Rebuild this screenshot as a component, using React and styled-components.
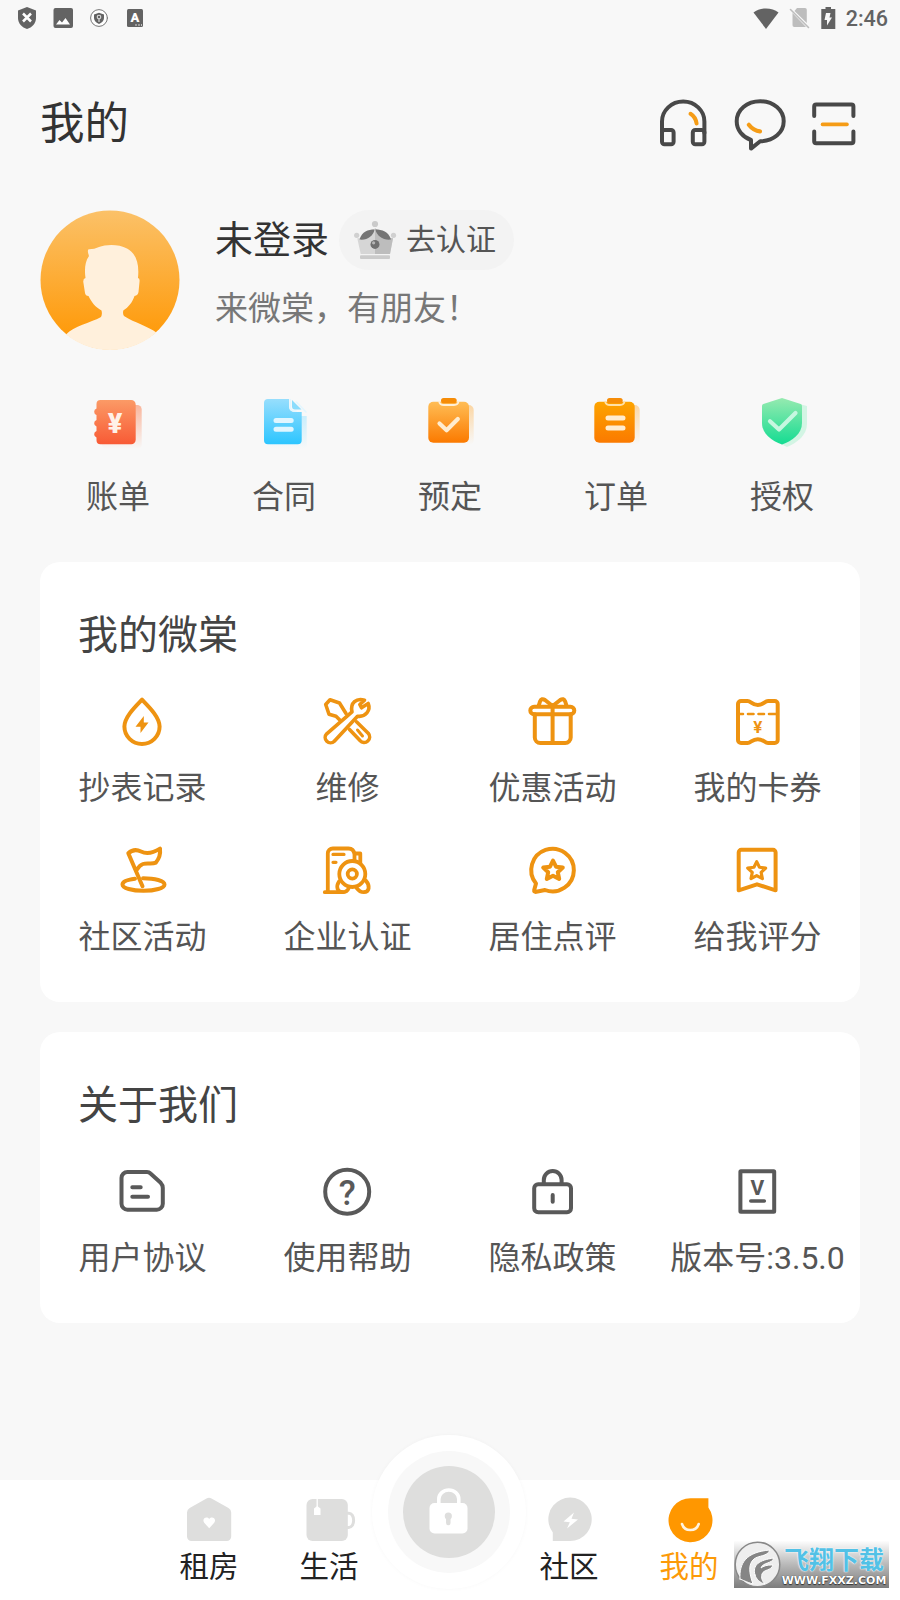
import React from 'react'
import styled, { createGlobalStyle } from 'styled-components'

const GlobalStyle = createGlobalStyle`
  * { box-sizing: border-box; }
  body {
    margin: 0;
    background: #f8f8f8;
    font-family: Roboto, "Noto Sans CJK SC", sans-serif;
  }
`
const Page = styled.div`
  position: relative;
  width: 900px;
  height: 1600px;
  display: flex;
  flex-direction: column;
  overflow: hidden;
  background: #f8f8f8;
`
const Icon = styled.svg`
  display: block;
  flex: none;
  width: ${props => props.$w || 56}px;
  height: ${props => props.$h || props.$w || 56}px;
  overflow: visible;
  fill: none;
  stroke-linecap: round;
  stroke-linejoin: round;
`
const LineIcon = styled(Icon)`
  stroke: ${props => props.$color || '#ee9311'};
  stroke-width: ${props => props.$stroke || 4};
`
const Glyph = styled.text`
  font-family: Roboto, sans-serif;
  font-size: ${props => props.$size}px;
  font-weight: ${props => props.$weight || 500};
  text-anchor: middle;
  stroke: none;
`

/* status bar */
const StatusBar = styled.div`
  display: flex;
  align-items: center;
  height: 36px;
  padding: 0 12px 0 17px;
`
const StatusGroup = styled.div`
  display: flex;
  align-items: center;
  gap: ${props => props.$gap}px;
  margin-left: ${props => (props.$right ? 'auto' : 0)};
`
const Clock = styled.span`
  margin-left: -1px;
  padding-top: 2px;
  font-size: 21.5px;
  line-height: 34px;
  font-weight: 500;
  color: #636363;
`

/* header */
const Header = styled.header`
  display: flex;
  align-items: center;
  justify-content: space-between;
  height: 84px;
  margin-top: 44px;
  padding: 0 36px 0 40px;
`
const Title = styled.h1`
  margin: 0;
  padding-top: 4px;
  font-size: 44.5px;
  line-height: 60px;
  font-weight: 400;
  color: #333;
`
const Actions = styled.div`
  display: flex;
  gap: 20px;
`

/* profile */
const Profile = styled.section`
  display: flex;
  gap: 35px;
  margin-top: 46px;
  padding-left: 40px;
`
const NameRow = styled.div`
  display: flex;
  align-items: center;
  gap: 10px;
  height: 60px;
`
const Name = styled.span`
  font-size: 38px;
  line-height: 60px;
  color: #333;
`
const Badge = styled.span`
  display: flex;
  align-items: center;
  gap: 9px;
  height: 60px;
  padding: 0 18px 0 14px;
  border-radius: 30px;
  background: #f3f3f3;
  font-size: 30px;
  line-height: 60px;
  color: #555;
`
const Slogan = styled.p`
  margin: 19px 0 0;
  font-size: 33px;
  line-height: 40px;
  color: #777;
`

/* grids */
const Shortcuts = styled.section`
  display: grid;
  grid-template-columns: repeat(5, 166px);
  height: 168px;
  padding: 44px 35px 0;
`
const Cell = styled.div`
  display: flex;
  flex-direction: column;
  align-items: center;
  gap: ${props => props.$gap || 17}px;
`
const Label = styled.span`
  font-size: 32px;
  line-height: 44px;
  white-space: nowrap;
  color: #555;
`
const Card = styled.section`
  height: ${props => props.$height}px;
  margin: ${props => props.$top}px 40px 0;
  padding-top: 44px;
  border-radius: 20px;
  background: #fff;
`
const CardTitle = styled.h2`
  margin: 0 0 27px 38px;
  font-size: 40px;
  line-height: 60px;
  font-weight: 400;
  color: #444;
`
const CardGrid = styled.div`
  display: grid;
  grid-template-columns: repeat(4, 205px);
  row-gap: 32px;

  svg {
    margin-left: -1px;
  }
`

/* bottom nav */
const Nav = styled.nav`
  display: flex;
  align-items: flex-start;
  height: 120px;
  margin-top: auto;
  padding-left: 149px;
  background: #fff;
`
const NavItem = styled.div`
  display: flex;
  flex-direction: column;
  align-items: center;
  gap: 3px;
  width: 120px;
  padding-top: 16px;
  font-size: 29.5px;
  line-height: 40px;
  color: ${props => (props.$active ? '#fc9a08' : '#222')};
`
const Unlock = styled.div`
  display: flex;
  align-items: center;
  justify-content: center;
  flex: none;
  width: 154px;
  height: 154px;
  margin: -45px -17px 0;
  border-radius: 50%;
  background: #fff;
  box-shadow: 0 0 4px rgba(0, 0, 0, 0.03);
`
const UnlockRing = styled.div`
  padding: 15px;
  border-radius: 50%;
  background: #f8f8f8;
`
const UnlockCore = styled.div`
  width: 92px;
  height: 92px;
  border-radius: 50%;
  background: #dededd;
`

/* site stamp lying over the corner of the nav */
const Stamp = styled.div`
  position: absolute;
  right: 11px;
  bottom: 12px;
  display: flex;
  align-items: center;
  width: 155px;
  height: 47px;
  background: linear-gradient(#fdfdfd, #b9b9b9 50%, #7d7d7d);
`
const StampText = styled.div`
  display: flex;
  flex-direction: column;
  align-items: center;
  width: 106px;
  padding-top: 4px;
`
const StampName = styled.span`
  font-size: 25px;
  line-height: 27px;
  font-weight: 700;
  color: #52c1e6;
  white-space: nowrap;
  text-shadow: 0 0 2px #fff, 0 0 1px #fff;
`
const StampUrl = styled.span`
  font-family: "DejaVu Sans", sans-serif;
  font-size: 11px;
  line-height: 13px;
  font-weight: 700;
  color: #fff;
  white-space: nowrap;
  text-shadow: 0 0 1px #333, 0 1px 1px #333;
`

const Gradient = ({ id, from, to }) => (
  <linearGradient id={id} x1="0" y1="0" x2="0" y2="1">
    <stop offset="0" stopColor={from} />
    <stop offset="1" stopColor={to} />
  </linearGradient>
)

const STAR = 'M0 -10 L3 -3.8 L9.8 -3 L4.8 1.7 L6.2 8.5 L0 5.2 L-6.2 8.5 L-4.8 1.7 L-9.8 -3 L-3 -3.8 Z'

const StatusIcons = () => (
  <StatusBar>
    <StatusGroup $gap={17}>
      <Icon $w={20} $h={22}>
        <path d="M10 0 L19 3.5 V11 C19 16.5 15 20.5 10 22 C5 20.5 1 16.5 1 11 V3.5 Z" fill="#636363" />
        <path d="M6 6.5 L14 14.5 M14 6.5 L6 14.5" stroke="#fff" strokeWidth="2.5" strokeLinecap="butt" />
      </Icon>
      <Icon $w={19} $h={20}>
        <rect x="-0.5" width="19.5" height="20" rx="2" fill="#636363" />
        <path d="M2 16.5 L5.5 12 L8 14.5 L11.5 10 L16 16.5 Z" fill="#fff" />
      </Icon>
      <Icon $w={18}>
        <circle cx="9" cy="9" r="8.4" fill="#fff" stroke="#777" strokeWidth="1" />
        <path d="M9 3.8 L14 5.5 V9 C14 12 11.5 14 9 15 C6.5 14 4 12 4 9 V5.5 Z" fill="#636363" />
        <circle cx="9" cy="8" r="1.8" stroke="#ddd" strokeWidth="1.1" />
        <path d="M9 10 V12.5" stroke="#ddd" strokeWidth="1.2" />
      </Icon>
      <Icon $w={18}>
        <rect x="2" width="16" height="18" rx="1.5" fill="#636363" />
        <Glyph x="10" y="13" $size={13} $weight={900} fill="#fff">A</Glyph>
        <path d="M10.5 16 h1 M13.5 16 h1 M16 16 h.8" stroke="#fff" strokeWidth="1.4" strokeLinecap="butt" />
      </Icon>
    </StatusGroup>
    <StatusGroup $gap={11} $right>
      <Icon $w={26} $h={21}>
        <path d="M0.5 4.5 C7 -1 19 -1 25.5 4.5 L13 21 Z" fill="#636363" />
      </Icon>
      <Icon $w={20}>
        <path d="M7 0 H15 a1.8 1.8 0 0 1 1.8 1.8 V15 L4.5 3 Z M2.5 5 L16 19 H4.3 a1.8 1.8 0 0 1 -1.8 -1.8 Z" fill="#bdbdbd" />
        <path d="M0.5 1.5 L18.5 19.5" stroke="#bdbdbd" strokeWidth="1.6" />
      </Icon>
      <Icon $w={15} $h={22}>
        <path d="M4.5 0 H10 V2 H14.3 V22 H0.3 V2 H4.5 Z" fill="#636363" />
        <path d="M5 6 H9.5 L8.5 10.5 H11 L6 18.5 V13 H3.5 Z" fill="#f8f8f8" />
      </Icon>
      <Clock>2:46</Clock>
    </StatusGroup>
  </StatusBar>
)

const HeaderActions = () => (
  <Actions>
    <LineIcon $color="#484848">
      <path d="M6 39 V27.5 a21.2 20 0 0 1 42.4 0 V39" />
      <rect x="6" y="36" width="11.6" height="14.2" rx="2.5" />
      <rect x="36.8" y="36" width="11.6" height="14.2" rx="2.5" />
      <path d="M34.5 19.8 C38 22 40 25.5 40.6 29.5" stroke="#f59c16" />
    </LineIcon>
    <LineIcon $color="#484848">
      <path d="M28.2 47.3 C42 46.8 51.7 38.5 51.7 27.3 S41.5 7.3 28.2 7.3 S4.7 15.8 4.7 27.3 C4.7 36 10.5 43 19 46 V54.6 Z" />
      <path d="M16.8 30.8 Q21.5 36.8 28 37.4" stroke="#f59c16" strokeWidth="4.2" />
    </LineIcon>
    <LineIcon $color="#484848">
      <path d="M6.2 22 V12.5 a2 2 0 0 1 2 -2 H43.4 a2 2 0 0 1 2 2 V22" />
      <path d="M6.2 37.5 V47.3 a2 2 0 0 0 2 2 H43.4 a2 2 0 0 0 2 -2 V37.5" />
      <path d="M14.5 30.4 H39" stroke="#f59c16" strokeWidth="3.6" />
    </LineIcon>
  </Actions>
)

const Avatar = () => (
  <Icon $w={140}>
    <defs>
      <Gradient id="avatar" from="#fbc168" to="#ff9600" />
      <clipPath id="avatarClip"><circle cx="70" cy="70" r="70" /></clipPath>
    </defs>
    <circle cx="70" cy="70" r="69.5" fill="url(#avatar)" />
    <path
      clipPath="url(#avatarClip)"
      fill="#fff0dc"
      d="M49 46 Q47 41 48.5 39.3 Q54 39.5 59 37 C66 34.3 79 34 87 38.5 C96 43.5 99.5 53 98 68 Q100 68 99.5 72 L98.5 82 Q98 85.5 94.5 86 C92.5 92.5 88 97.5 83.3 100.5 Q82.5 104 84 106 C95 113 108 116 117 123 L120 140 H20 L26 124.5 C34 116 50 113 61 107 Q62.5 104 61.5 100.5 C55 97 51.5 92 48.5 86 Q45.5 86 45 83 L43.3 72 Q43 68.5 45.5 68 C44.5 61 44.5 52 49 46 Z"
    />
  </Icon>
)

const Crown = () => (
  <Icon $w={44} $h={40}>
    <path d="M4.3 18.3 L10 18 L22 8.3 L34 18 L40 18.3 L37 34 H7.7 Z" fill="#d6d6d6" />
    <path d="M22 8.3 L34 18 L40 18.3 L37 34 H22 Z" fill="#bdbdbd" />
    <path d="M6.5 19.5 C9 11.5 15 9.5 21.5 9.5 C20.5 16 14 20.5 6.5 19.5 Z" fill="#757575" />
    <path d="M38 19.5 C35.5 11.5 29 9.5 22.5 9.5 C23.5 16 30.5 20.5 38 19.5 Z" fill="#757575" />
    <circle cx="22" cy="4" r="3.1" fill="#cacaca" />
    <circle cx="3.7" cy="15.3" r="2.6" fill="#d0d0d0" />
    <circle cx="40.5" cy="15.3" r="2.6" fill="#d0d0d0" />
    <circle cx="22" cy="24.4" r="4.5" fill="#6f6f6f" />
    <circle cx="20.6" cy="22.8" r="1.6" fill="#b5b5b5" />
    <rect x="7" y="35.3" width="30" height="3.8" rx="1" fill="#cbcbcb" />
  </Icon>
)

const shortcuts = [
  {
    label: '账单',
    icon: (
      <Icon>
        <defs>
          <Gradient id="bill" from="#fb9a66" to="#f85a35" />
          <Gradient id="billShade" from="#f9b59b" to="#f8f8f8" />
        </defs>
        <rect x="12" y="11" width="39.7" height="44" rx="4.5" fill="url(#billShade)" />
        <path d="M10.5 6 H41.2 a4.5 4.5 0 0 1 4.5 4.5 V45.8 a4.5 4.5 0 0 1 -4.5 4.5 H10.5 a4 4 0 0 1 -4 -4 V43.5 a3.5 3.5 0 0 1 0 -6.6 V32.5 a3.5 3.5 0 0 1 0 -6.6 V21 a3.5 3.5 0 0 1 0 -6.6 V10 a4 4 0 0 1 4 -4 Z" fill="url(#bill)" />
        <Glyph x="25" y="39" $size={27} $weight={900} fill="#fff1e8">¥</Glyph>
      </Icon>
    ),
  },
  {
    label: '合同',
    icon: (
      <Icon>
        <defs>
          <Gradient id="deal" from="#97defd" to="#2cc5ff" />
          <Gradient id="dealShade" from="#c8eefd" to="#f8f8f8" />
        </defs>
        <path d="M14 22 H50.7 V51 a4 4 0 0 1 -4 4 H18 a4 4 0 0 1 -4 -4 Z" fill="url(#dealShade)" />
        <path d="M12 5 H33 V13 a5 5 0 0 0 5 5 H45.7 V46.3 a4 4 0 0 1 -4 4 H12 a4 4 0 0 1 -4 -4 V9 a4 4 0 0 1 4 -4 Z" fill="url(#deal)" />
        <path d="M36 6 L45.5 15.5 H39 a3 3 0 0 1 -3 -3 Z" fill="#8bdcfc" />
        <path d="M34.3 5.5 V13 a4 4 0 0 0 4 4 H40 M40.5 8 L50 18" stroke="#e3f6fe" strokeWidth="1.6" />
        <path d="M20 26.5 H35.2 M20 35.3 H35.2" stroke="#e0f6ff" strokeWidth="5" />
      </Icon>
    ),
  },
  {
    label: '预定',
    icon: (
      <Icon>
        <defs>
          <Gradient id="book" from="#ffbd55" to="#fb7a00" />
          <Gradient id="bookShade" from="#fbd6a4" to="#f8f8f8" />
        </defs>
        <rect x="12" y="11" width="39.7" height="40" rx="5" fill="url(#bookShade)" />
        <rect x="6.3" y="7.7" width="40.7" height="41" rx="5" fill="url(#book)" />
        <path d="M17.2 7.7 Q18 11 22 11 H32 Q36 11 36.5 7.7" stroke="#ffefd6" strokeWidth="1.8" />
        <rect x="19" y="4" width="15.7" height="5.2" rx="2.6" fill="#f68c07" />
        <path d="M17.5 29.5 L24.6 36.2 L35.8 25" stroke="#ffeccf" strokeWidth="4.2" />
      </Icon>
    ),
  },
  {
    label: '订单',
    icon: (
      <Icon>
        <defs>
          <Gradient id="order" from="#fda400" to="#fb7a00" />
          <Gradient id="orderShade" from="#fbd6a4" to="#f8f8f8" />
        </defs>
        <rect x="12" y="11" width="39.7" height="40" rx="5" fill="url(#orderShade)" />
        <rect x="6.3" y="7.7" width="40.4" height="41" rx="5" fill="url(#order)" />
        <path d="M17.2 7.7 Q18 11 22 11 H32 Q36 11 36.5 7.7" stroke="#ffe0a8" strokeWidth="1.8" />
        <rect x="19" y="4" width="15.7" height="5.2" rx="2.6" fill="#f68c07" />
        <path d="M20 24 H35 M20 34 H35" stroke="#ffeccf" strokeWidth="5" />
      </Icon>
    ),
  },
  {
    label: '授权',
    icon: (
      <Icon>
        <defs><Gradient id="auth" from="#96eab0" to="#14dc92" /></defs>
        <path d="M33 7 L53 12 V30 C53 41 43 49 33 53 C24 49 13 41 13 30 V12 Z" fill="#d3f5e4" />
        <path d="M28 4 L46.7 10 Q48 10.5 48 12 V29 C48 40 38 47 28 50.4 C18 47 8 40 8 29 V12 Q8 10.5 9.3 10 Z" fill="url(#auth)" />
        <path d="M16 27.2 L25 35.5 L41.5 19" stroke="#c6f7e0" strokeWidth="4.2" />
      </Icon>
    ),
  },
]

const services = [
  {
    label: '抄表记录',
    icon: (
      <LineIcon>
        <path d="M28 6.7 C21.5 13.5 10.4 24 10.4 33.6 a17.6 17.4 0 0 0 35.2 0 C45.6 24 34.5 13.5 28 6.7 Z" />
        <path d="M29.8 23 L21.5 33.8 H26.5 V40 L34.5 29.4 H29.8 Z" fill="#ee9311" stroke="none" />
      </LineIcon>
    ),
  },
  {
    label: '维修',
    icon: (
      <LineIcon $stroke={3.6}>
        <path d="M27 20.5 L20.5 10 L11 6.8 L6.7 11.5 L10 21.3 L17 23.3 L20.8 27" />
        <path d="M30.5 36.5 L41 47.6 a5.4 5.4 0 0 0 8.2 -7.4 L37.5 28.8" />
        <path d="M38.5 37 L43.5 43" strokeWidth="3" />
        <path d="M33 18.8 C31 10 37.5 4.5 45.5 7.2 L40.8 11.5 L42.5 14.8 L49.2 10.5 C52 17.5 46.5 24.3 38.5 23.2 L15.3 48.2 a5.2 5.2 0 0 1 -7.6 -7.4 Z" />
      </LineIcon>
    ),
  },
  {
    label: '优惠活动',
    icon: (
      <LineIcon>
        <rect x="6.3" y="13.7" width="44" height="7.6" rx="3.8" />
        <path d="M10.8 21.3 V44.5 a5.5 5.5 0 0 0 5.5 5.5 H41.2 a5.5 5.5 0 0 0 5.5 -5.5 V21.3 M28.6 13.7 V50" />
        <path d="M28.6 13 L21 7 Q17.5 4.8 16 8.5 L14.6 13 M28.6 13 L36.2 7 Q39.7 4.8 41.2 8.5 L42.6 13" />
      </LineIcon>
    ),
  },
  {
    label: '我的卡券',
    icon: (
      <LineIcon>
        <path d="M12 8 H18.5 C22 8 23 12 28.8 12 S35.6 8 39.1 8 H45.7 a3 3 0 0 1 3 3 V47 a3 3 0 0 1 -3 3 H39.1 C35.6 50 34.6 46.2 28.8 46.2 S22 50 18.5 50 H12 a3 3 0 0 1 -3 -3 V11 a3 3 0 0 1 3 -3 Z" />
        <path d="M9 21 H14 M19 21 H24.5 M29.5 21 H35 M40 21 H48" strokeWidth="2.6" />
        <Glyph x="28.8" y="39.8" $size={17} $weight={700} fill="#ee9311">¥</Glyph>
      </LineIcon>
    ),
  },
  {
    label: '社区活动',
    icon: (
      <LineIcon>
        <path d="M28.5 44.3 L14.3 11.3 C18 7.8 22.5 7.3 27 9.5 C33 12.5 39 11 46 6.6 C46.5 11 45 17 41.8 20.6 C38 22.5 33 20.5 29 22 Q25.5 23.3 23 27.5" />
        <path d="M21 36.7 C12 37.8 8.5 40 8.5 42.5 C8.5 46.2 18 48.8 29.5 48.8 S50.5 46.2 50.5 42.5 S41 36.2 29 36.2" />
      </LineIcon>
    ),
  },
  {
    label: '企业认证',
    icon: (
      <LineIcon $stroke={3.8}>
        <path d="M5.8 50.2 H24 M8.8 50 V11.5 a5 5 0 0 1 5 -5 H29.5 Q34.8 6.5 35.5 12.5 V18 M35.5 11.5 H41.3 V21" />
        <path d="M14 12.4 H25 M14 20.3 H17" strokeWidth="3.2" />
        <circle cx="33.3" cy="32" r="13" />
        <circle cx="33.3" cy="32" r="4.6" />
        <path d="M20 39.5 C16.5 45 18.5 50.2 23.5 50.2 C27 50.2 28.8 48.5 29.8 45.8" />
        <path d="M46.8 38.5 C51.5 44 50.3 50.2 44.8 50.2 C41 50.2 39.5 48.5 37.5 45.8" />
      </LineIcon>
    ),
  },
  {
    label: '居住点评',
    icon: (
      <LineIcon>
        <path d="M21 48 A21.3 21.3 0 1 0 12 41.5 L10.2 48 Q9.8 50.3 12.3 49.8 Z" />
        <path d={STAR} transform="translate(29 28.5)" />
      </LineIcon>
    ),
  },
  {
    label: '给我评分',
    icon: (
      <LineIcon>
        <path d="M12.3 7.8 H44 a2.6 2.6 0 0 1 2.6 2.6 V48.3 L28 42.3 L9.7 48.3 V10.4 a2.6 2.6 0 0 1 2.6 -2.6 Z" />
        <path d={STAR} transform="translate(27.7 28.8) scale(0.92)" strokeWidth="3.4" />
      </LineIcon>
    ),
  },
]

const about = [
  {
    label: '用户协议',
    icon: (
      <LineIcon $color="#595959">
        <path d="M13.5 9 H33 Q35 9 36.5 10.5 L46.7 19.8 Q48.8 22 48.8 25 V40.7 a6 6 0 0 1 -6 6 H13.5 a6 6 0 0 1 -6 -6 V15 a6 6 0 0 1 6 -6 Z" />
        <path d="M18.3 24.3 H26.7 M18.3 33.8 H34" />
      </LineIcon>
    ),
  },
  {
    label: '使用帮助',
    icon: (
      <LineIcon $color="#595959">
        <circle cx="28.2" cy="28.7" r="22" />
        <Glyph x="28.3" y="41.8" $size={35} $weight={500} fill="#595959">?</Glyph>
      </LineIcon>
    ),
  },
  {
    label: '隐私政策',
    icon: (
      <LineIcon $color="#595959">
        <rect x="10.2" y="21.3" width="36.8" height="28" rx="4" />
        <path d="M19.8 21 V17 a8.9 9 0 0 1 17.8 0 V21 M28.7 32 V38.7" />
      </LineIcon>
    ),
  },
  {
    label: '版本号:3.5.0',
    icon: (
      <LineIcon $color="#595959">
        <rect x="11.4" y="8.3" width="33.8" height="40.4" rx="0.5" />
        <Glyph x="28.4" y="32.3" $size={21} $weight={700} fill="#595959">V</Glyph>
        <path d="M21.8 38 H35.3" strokeWidth="3.6" />
      </LineIcon>
    ),
  },
]

const HouseIcon = () => (
  <Icon $w={48}>
    <path d="M21.5 2.5 Q24 1 26.5 2.5 L43.5 12 Q46.2 13.5 46.2 16.5 V40.5 a4.5 4.5 0 0 1 -4.5 4.5 H6.5 a4.5 4.5 0 0 1 -4.5 -4.5 V16.5 Q2 13.5 4.7 12 Z" fill="#dededd" />
    <path d="M24.2 32.3 L19.2 26.8 C16.5 23 21.5 19.5 24.2 23 C27 19.5 32 23 29.2 26.8 Z" fill="#fff" />
  </Icon>
)
const CupIcon = () => (
  <Icon $w={48}>
    <rect x="1.5" y="3" width="41.3" height="42" rx="6" fill="#dededd" />
    <path d="M43 17.3 C50.5 16 50.5 32.5 43 31.5" stroke="#dededd" strokeWidth="3" />
    <path d="M12.2 3 V11" stroke="#fff" strokeWidth="1.3" />
    <path d="M12.2 10 L15.5 12.5 V19 H9 V12.5 Z" fill="#fff" />
  </Icon>
)
const BoltIcon = () => (
  <Icon $w={48}>
    <path d="M7.8 45 V36.5 A21.7 21.7 0 1 1 25 45 Z" fill="#dededd" />
    <path d="M29 16.5 L18.5 25.5 L24.8 26.3 L22 32.5 L33 23.5 L26.5 22.7 Z" fill="#fff" />
  </Icon>
)
const SmileIcon = () => (
  <Icon $w={48}>
    <path d="M25.7 2.3 H43.4 V11.5 A22 22 0 1 1 25.7 2.3 Z" fill="#ff9700" />
    <path d="M17 28 A8.8 8.8 0 0 0 33.7 28" stroke="#fff3e0" strokeWidth="2.6" />
  </Icon>
)

const StampLogo = () => (
  <Icon $w={47}>
    <circle cx="23.5" cy="23.5" r="22.3" fill="#eee" stroke="#888" strokeWidth="1.5" />
    <path d="M6 38 C5 22 12 11 36 9 C33 16 25 14 20 18 C14 23 15 32 19 43 C12 41 9 39 6 38 Z" fill="#858585" stroke="#fff" />
    <path d="M21 34 C18 24 25 19 40 17 C38 23 29 21 27 27 C31 24 35 24 39 24 C37 30 30 28 28 33 C27 37 28 40 31 43 C26 42 22 38 21 34 Z" fill="#858585" stroke="#fff" />
  </Icon>
)

const Item = ({ label, icon, gap }) => (
  <Cell $gap={gap}>
    {icon}
    <Label>{label}</Label>
  </Cell>
)

export default function App() {
  return (
    <Page>
      <GlobalStyle />
      <StatusIcons />
      <Header>
        <Title>我的</Title>
        <HeaderActions />
      </Header>
      <Profile>
        <Avatar />
        <div>
          <NameRow>
            <Name>未登录</Name>
            <Badge><Crown />去认证</Badge>
          </NameRow>
          <Slogan>来微棠，有朋友！</Slogan>
        </div>
      </Profile>
      <Shortcuts>
        {shortcuts.map(item => <Item key={item.label} gap={25} {...item} />)}
      </Shortcuts>
      <Card $height={440} $top={44}>
        <CardTitle>我的微棠</CardTitle>
        <CardGrid>
          {services.map(item => <Item key={item.label} {...item} />)}
        </CardGrid>
      </Card>
      <Card $height={291} $top={30}>
        <CardTitle>关于我们</CardTitle>
        <CardGrid>
          {about.map(item => <Item key={item.label} {...item} />)}
        </CardGrid>
      </Card>
      <Nav>
        <NavItem><HouseIcon />租房</NavItem>
        <NavItem><CupIcon />生活</NavItem>
        <Unlock>
          <UnlockRing>
            <UnlockCore>
              <Icon $w={92}>
                <path d="M35.8 40 V33 a10 9 0 0 1 20 0 V40" stroke="#fff" strokeWidth="3.6" />
                <rect x="26.5" y="37" width="38" height="30.5" rx="5" fill="#fff" />
                <path d="M45.3 51 V57" stroke="#dededd" strokeWidth="4.5" />
                <circle cx="45.3" cy="50" r="3.6" fill="#dededd" />
              </Icon>
            </UnlockCore>
          </UnlockRing>
        </Unlock>
        <NavItem><BoltIcon />社区</NavItem>
        <NavItem $active><SmileIcon />我的</NavItem>
      </Nav>
      <Stamp>
        <StampLogo />
        <StampText>
          <StampName>飞翔下载</StampName>
          <StampUrl>WWW.FXXZ.COM</StampUrl>
        </StampText>
      </Stamp>
    </Page>
  )
}
